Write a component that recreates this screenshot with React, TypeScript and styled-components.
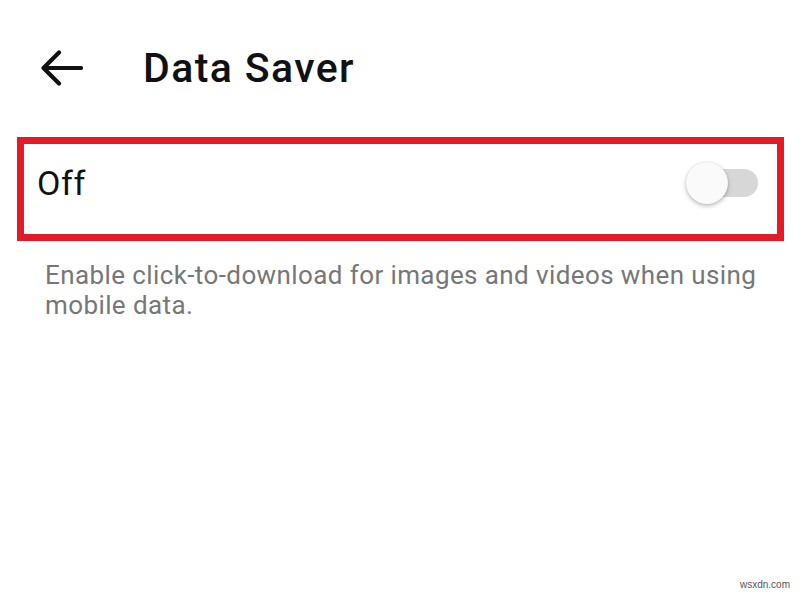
import React from "react";
import styled, { createGlobalStyle } from "styled-components";

const Global = createGlobalStyle`
  html, body { margin: 0; padding: 0; background: #ffffff; }
  body { font-family: Roboto, "Noto Sans", Arial, sans-serif; }
`;

const Page = styled.div`
  position: relative;
  width: 800px;
  height: 597px;
  background: #fff;
  overflow: hidden;
`;

const Header = styled.div`
  display: flex;
  align-items: center;
  height: 70px;
  margin-top: 33px;
  padding-left: 40px;
`;

const BackButton = styled.div`
  width: 44px;
  height: 40px;
  display: flex;
  align-items: center;
  justify-content: center;
  margin-right: 59px;
`;

const Title = styled.h1`
  margin: 0;
  font-size: 41px;
  font-weight: 500;
  color: #111;
  letter-spacing: 1.4px;
`;

const SettingBox = styled.div`
  margin: 34px 16px 0 17px;
  border: 7px solid #e21b27;
  display: flex;
  align-items: center;
  justify-content: space-between;
  padding: 0 19px 12px 13px;
  box-sizing: content-box;
  height: 78px;
`;

const Label = styled.span`
  font-size: 34px;
  color: #111;
  letter-spacing: 0.6px;
`;

const Track = styled.div`
  position: relative;
  width: 57px;
  height: 28px;
  border-radius: 14px;
  background: #d7d7d7;
`;

const Knob = styled.div`
  position: absolute;
  left: -15px;
  top: -7px;
  width: 42px;
  height: 42px;
  border-radius: 50%;
  background: #fafafa;
  box-shadow: 0 2px 4px rgba(0, 0, 0, 0.25), 0 0 2px rgba(0, 0, 0, 0.12);
`;

const Description = styled.p`
  margin: 19px 0 0 45px;
  width: 740px;
  font-size: 26px;
  line-height: 30px;
  letter-spacing: 0.4px;
  color: #777;
`;

const Watermark = styled.span`
  position: absolute;
  right: 10px;
  bottom: 7px;
  font-size: 10px;
  color: #555;
  font-family: "Liberation Sans", Arial, sans-serif;
`;

export default function App() {
  return (
    <Page>
      <Global />
      <Header>
        <BackButton>
          <svg width="42" height="36" viewBox="0 0 42 36" fill="none">
            <path
              d="M18 2.5 L2.5 18 L18 33.5 M2.5 18 H40"
              stroke="#111"
              strokeWidth="4.2"
              strokeLinecap="round"
              strokeLinejoin="round"
            />
          </svg>
        </BackButton>
        <Title>Data Saver</Title>
      </Header>
      <SettingBox>
        <Label>Off</Label>
        <Track>
          <Knob />
        </Track>
      </SettingBox>
      <Description>
        Enable click-to-download for images and videos when using mobile data.
      </Description>
      <Watermark>wsxdn.com</Watermark>
    </Page>
  );
}
